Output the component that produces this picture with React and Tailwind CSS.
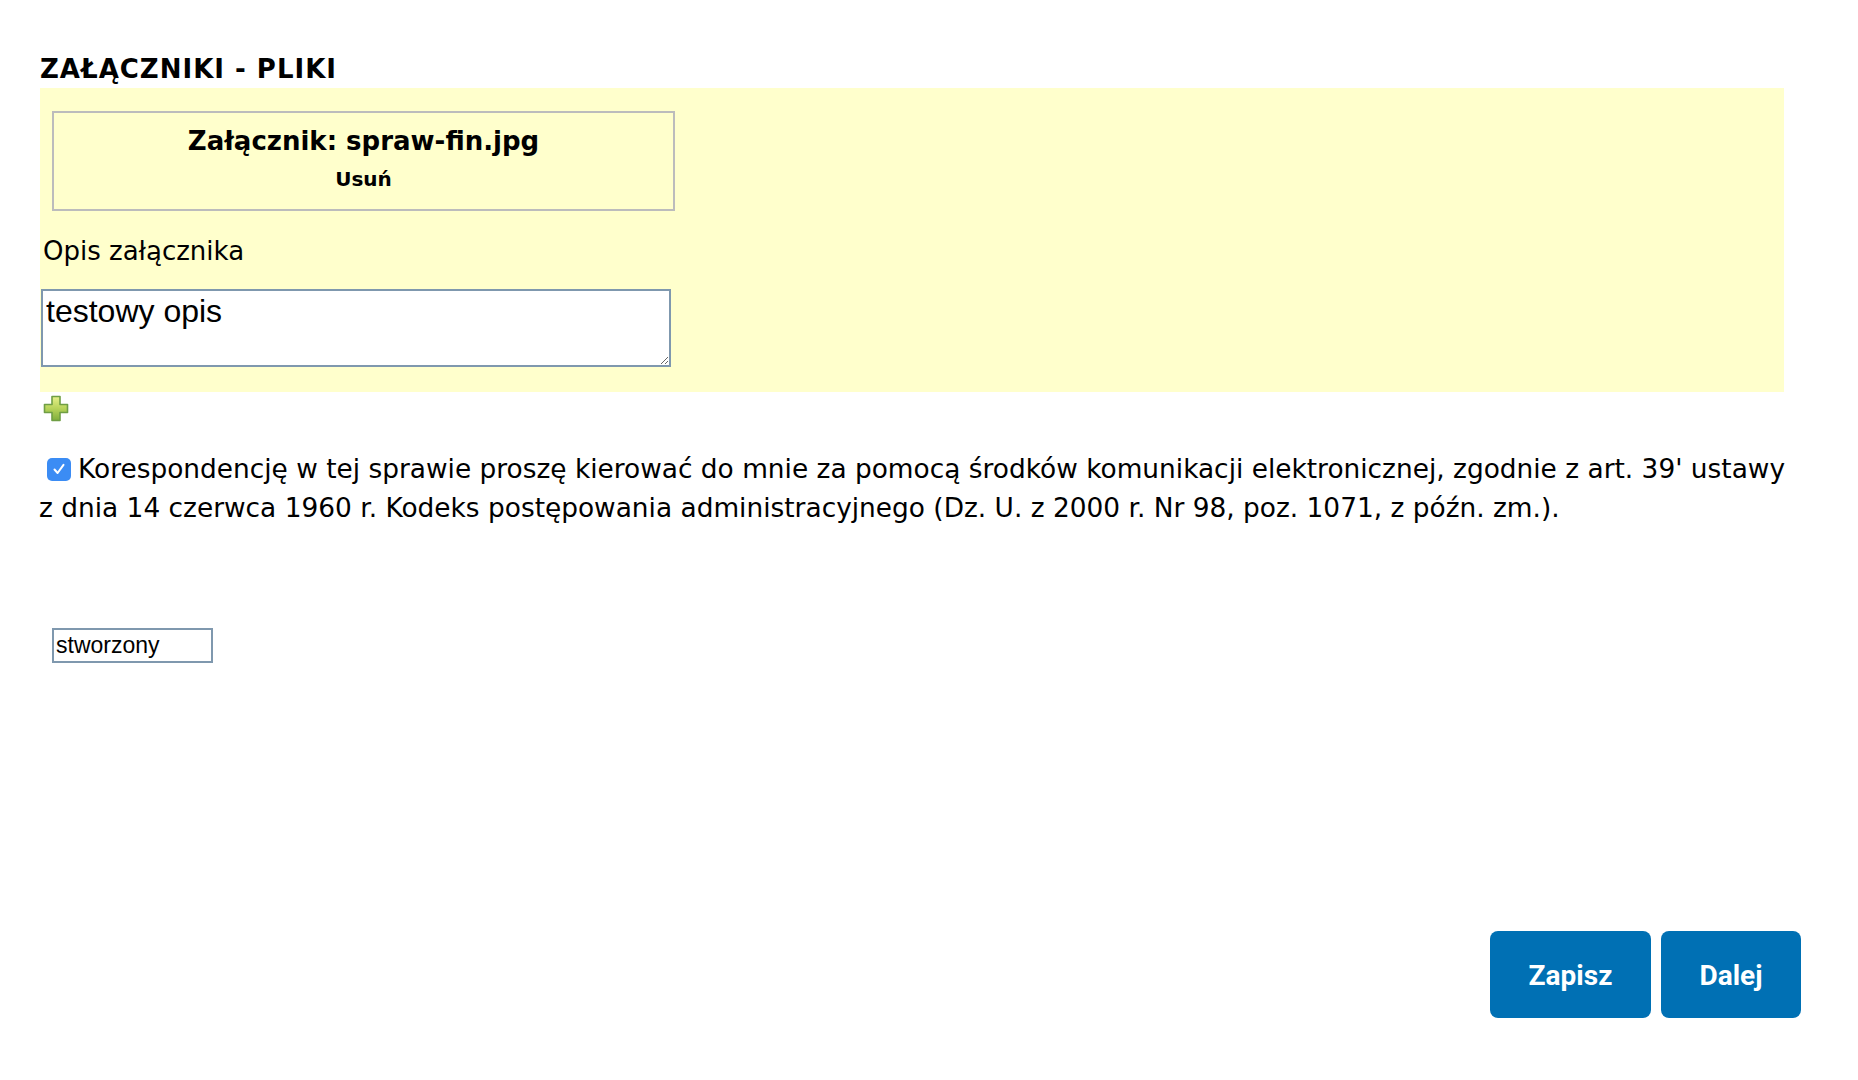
import React from "react";

function PlusIcon() {
  return (
    <svg width="26" height="27" viewBox="0 0 26 27">
      <defs>
        <linearGradient id="pg" x1="0" y1="0" x2="0" y2="1">
          <stop offset="0" stopColor="#e6f08a" />
          <stop offset="0.5" stopColor="#b7d35a" />
          <stop offset="1" stopColor="#7fae3c" />
        </linearGradient>
      </defs>
      <path
        d="M9 1.5 H17 V9.5 H24.5 V17.5 H17 V25.5 H9 V17.5 H1.5 V9.5 H9 Z"
        fill="url(#pg)"
        stroke="#6f9e45"
        strokeWidth="1.6"
        strokeLinejoin="round"
      />
    </svg>
  );
}

function CheckIcon() {
  return (
    <span className="inline-flex items-center justify-center w-[24px] h-[23px] rounded-[5px] bg-[#3b8cf4] align-[2px] ml-[8px] mr-[7px]">
      <svg width="14" height="14" viewBox="0 0 14 14">
        <path d="M2.5 7.5 L5.6 11 L11.5 2.8" fill="none" stroke="#ffffff" strokeWidth="2" strokeLinecap="round" strokeLinejoin="round" />
      </svg>
    </span>
  );
}

export default function App() {
  return (
    <div className="w-[1858px] h-[1080px] bg-white text-black font-['DejaVu_Sans',sans-serif] overflow-hidden">
      <div className="pt-[54px] pl-[40px]">
        <h2 className="text-[26px] leading-[30px] font-bold tracking-[1px]">ZAŁĄCZNIKI - PLIKI</h2>
        <div className="mt-[4px] w-[1744px] bg-[#ffffcc] pt-[23px] pb-[25px]">
          <div className="ml-[12px] w-[623px] h-[100px] border-2 border-[#bcbcbc] pt-[12px] flex flex-col items-center">
            <div className="text-[26px] leading-[32px] font-bold">Załącznik: spraw-fin.jpg</div>
            <div className="mt-[9px] text-[20px] leading-[26px] font-bold">Usuń</div>
          </div>
          <div className="mt-[24px] ml-[3px] text-[26px] leading-[32px]">Opis załącznika</div>
          <textarea
            className="block mt-[22px] ml-[1px] w-[630px] h-[78px] border-2 border-[#7f98ae] bg-white px-[3px] pt-[2px] pb-0 text-[32px] leading-[36px] font-['Liberation_Sans',Arial,sans-serif] outline-none resize"
            defaultValue="testowy opis"
          />
        </div>
        <div className="mt-[3px] ml-[3px] h-[27px]">
          <PlusIcon />
        </div>
        <p className="mt-[27px] ml-[-1px] text-[26.4px] leading-[39px] whitespace-nowrap">
          <CheckIcon />
          Korespondencję w tej sprawie proszę kierować do mnie za pomocą środków komunikacji elektronicznej, zgodnie z art. 39' ustawy
          <br />
          z dnia 14 czerwca 1960 r. Kodeks postępowania administracyjnego (Dz. U. z 2000 r. Nr 98, poz. 1071, z późn. zm.).
        </p>
        <div className="mt-[101px] ml-[12px]">
          <input
            className="block w-[161px] h-[35px] border-2 border-[#7f98ae] px-[2px] text-[23px] font-['Liberation_Sans',Arial,sans-serif] outline-none"
            defaultValue="stworzony"
          />
        </div>
      </div>
      <div className="mt-[268px] pr-[57px] flex justify-end gap-[10px] font-['Roboto',sans-serif]">
        <button className="h-[87px] w-[161px] rounded-[8px] bg-[#0070b4] text-white text-[28px] font-bold pt-[3px]">Zapisz</button>
        <button className="h-[87px] w-[140px] rounded-[8px] bg-[#0070b4] text-white text-[28px] font-bold pt-[3px]">Dalej</button>
      </div>
    </div>
  );
}
